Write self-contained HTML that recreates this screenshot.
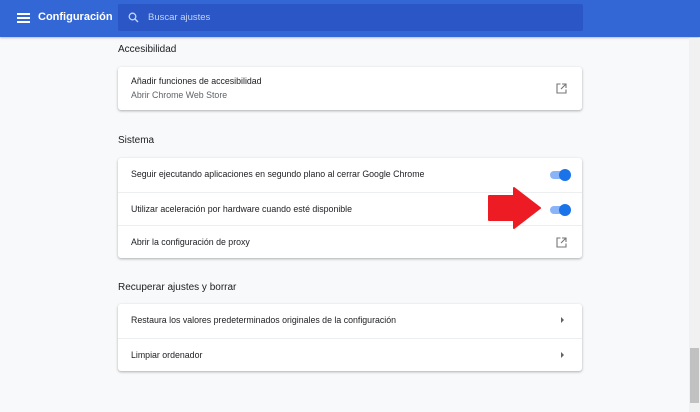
<!DOCTYPE html>
<html><head><meta charset="utf-8"><style>
*{margin:0;padding:0;box-sizing:border-box}
body{width:700px;height:412px;overflow:hidden;background:#f8f9fa;font-family:"Liberation Sans",Arial,sans-serif;position:relative;color:#202124}
.hdr{position:absolute;left:0;top:0;width:700px;height:37px;background:#3367d6;box-shadow:0 1px 2px rgba(0,0,0,.25)}
.ham{position:absolute;left:17px;top:13px;width:13px;height:10px;border-top:2px solid #fff;border-bottom:2px solid #fff}
.ham:after{content:"";position:absolute;left:0;top:2px;width:13px;height:2px;background:#fff}
.title{position:absolute;left:38px;top:11px;color:#fff;font-size:11px;font-weight:bold}
.search{position:absolute;left:118px;top:4px;width:465px;height:27px;background:#2a56c6;border-radius:2px}
.search span{position:absolute;left:30px;top:8px;font-size:9.5px;color:#c6d4f3}
.h{position:absolute;left:118px;font-size:10px;color:#202124}
.card{position:absolute;left:118px;width:464px;background:#fff;border-radius:3px;box-shadow:0 1px 2px rgba(60,64,67,.3),0 1px 3px rgba(60,64,67,.12)}
.row{position:relative;height:33.5px;border-top:1px solid #eceef0;font-size:8.8px}
.row:first-child{border-top:none}
.row .t{position:absolute;left:13px;top:11px}
.tog{position:absolute;right:13px;top:13px;width:19px;height:8px;border-radius:4px;background:#8ab4f8}
.tog:after{content:"";position:absolute;right:-2px;top:-2px;width:12px;height:12px;border-radius:50%;background:#1a73e8}
.ext{position:absolute;right:15px;top:11px}
.arr{position:absolute;right:18px;top:13px;width:0;height:0;border-left:3px solid #5f6368;border-top:3px solid transparent;border-bottom:3px solid transparent}
.sb{position:absolute;left:689px;top:38px;width:11px;height:374px;background:#f1f1f1}
.thumb{position:absolute;left:690px;top:348px;width:9px;height:55px;background:#c1c1c1}
</style></head><body>
<div class="hdr"><div class="ham"></div><div class="title">Configuración</div>
<div class="search"><svg style="position:absolute;left:10px;top:8px" width="11" height="11" viewBox="0 0 11 11"><circle cx="4.5" cy="4.5" r="3.3" fill="none" stroke="#c6d4f3" stroke-width="1.3"/><path d="M7 7l3 3" stroke="#c6d4f3" stroke-width="1.4"/></svg><span>Buscar ajustes</span></div></div>
<div class="h" style="top:44px">Accesibilidad</div>
<div class="card" style="top:67px;height:43px">
<div style="position:absolute;left:13px;top:9px;font-size:8.8px">Añadir funciones de accesibilidad</div>
<div style="position:absolute;left:13px;top:23px;font-size:8.8px;color:#5f6368">Abrir Chrome Web Store</div>
<svg class="ext" style="top:16px" width="11" height="11" viewBox="0 0 11 11"><path d="M4.5 1H1v9h9V6.5M6 1h4v4M10 1L5 6" fill="none" stroke="#757575" stroke-width="1.1"/></svg>
</div>
<div class="h" style="top:135px">Sistema</div>
<div class="card" style="top:158px;height:100px">
<div class="row"><div class="t">Seguir ejecutando aplicaciones en segundo plano al cerrar Google Chrome</div><div class="tog"></div></div>
<div class="row"><div class="t">Utilizar aceleración por hardware cuando esté disponible</div><div class="tog"></div></div>
<div class="row"><div class="t">Abrir la configuración de proxy</div><svg class="ext" width="11" height="11" viewBox="0 0 11 11"><path d="M4.5 1H1v9h9V6.5M6 1h4v4M10 1L5 6" fill="none" stroke="#757575" stroke-width="1.1"/></svg></div>
</div>
<svg style="position:absolute;left:487px;top:186px" width="55" height="44" viewBox="0 0 55 44"><path d="M2 10h25V2l26 20-26 20v-8H2z" fill="#ed1c24" stroke="#ed1c24" stroke-width="2" stroke-linejoin="round"/></svg>
<div class="h" style="top:282px">Recuperar ajustes y borrar</div>
<div class="card" style="top:304px;height:67px">
<div class="row"><div class="t">Restaura los valores predeterminados originales de la configuración</div><div class="arr"></div></div>
<div class="row"><div class="t">Limpiar ordenador</div><div class="arr"></div></div>
</div>
<div class="sb"></div><div class="thumb"></div>
</body></html>
